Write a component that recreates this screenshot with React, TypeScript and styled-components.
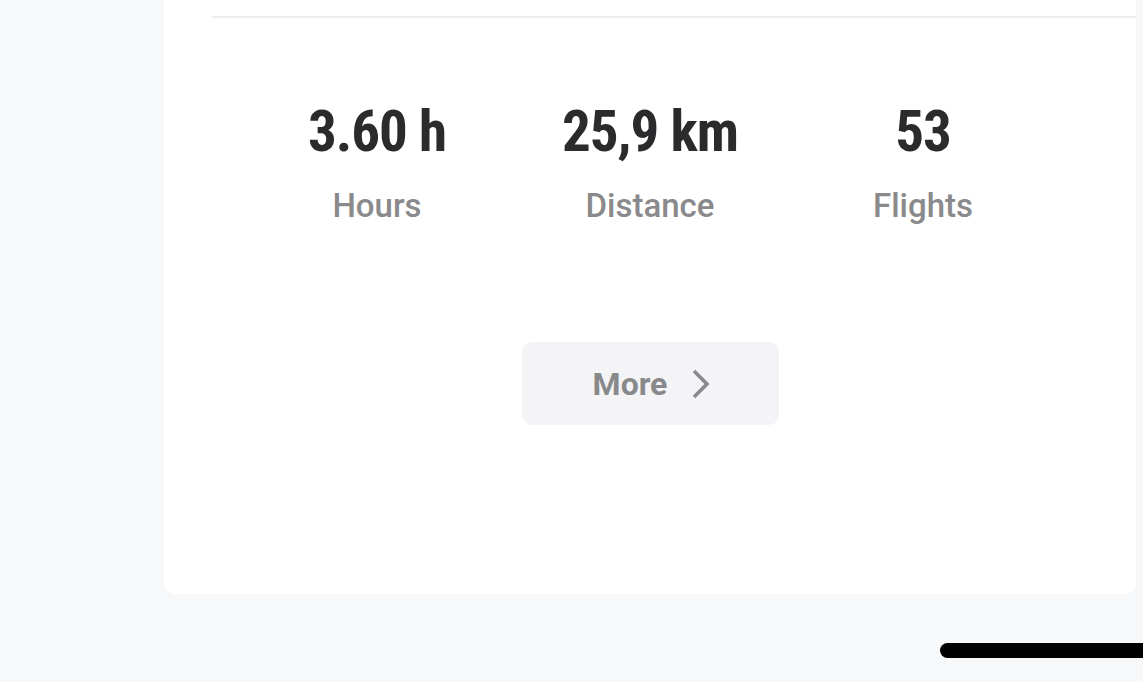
import React from "react";
import styled, { createGlobalStyle } from "styled-components";

const Global = createGlobalStyle`
  html, body { margin: 0; padding: 0; background: #f7f8fa; overflow: hidden; }
  body { width: 1143px; height: 682px; font-family: Roboto, "Liberation Sans", sans-serif; }
`;

const Page = styled.div`
  width: 1143px;
  height: 682px;
  display: flex;
  flex-direction: column;
`;

const Card = styled.section`
  margin-left: 164px;
  width: 972px;
  height: 594px;
  background: #ffffff;
  border-radius: 0 0 12px 12px;
  padding-top: 16px;
  box-sizing: border-box;
  display: flex;
  flex-direction: column;
  align-items: center;
`;

const Divider = styled.div`
  align-self: stretch;
  margin-left: 48px;
  height: 2px;
  background: #eeeeee;
`;

const Stats = styled.div`
  display: grid;
  grid-template-columns: repeat(3, 273px);
  margin-top: 84px;
`;

const Stat = styled.div`
  display: flex;
  flex-direction: column;
  align-items: center;
`;

const Value = styled.div`
  font-family: "Roboto Condensed", Roboto, sans-serif;
  font-stretch: 75%;
  font-weight: 700;
  font-size: 57px;
  letter-spacing: -1px;
  line-height: 60px;
  color: #2b2b2d;
`;

const Label = styled.div`
  font-family: Roboto, sans-serif;
  font-weight: 500;
  font-size: 33px;
  line-height: 36px;
  margin-top: 26px;
  color: #8a8a8c;
`;

const MoreButton = styled.button`
  margin-top: 118px;
  width: 257px;
  height: 83px;
  border: none;
  border-radius: 10px;
  background: #f4f4f6;
  display: flex;
  align-items: center;
  justify-content: center;
  gap: 24px;
  font-family: Roboto, sans-serif;
  font-weight: 700;
  font-size: 32px;
  color: #88898b;
  padding: 0 0 0 4px;
`;

const HomeBar = styled.div`
  margin-top: 49px;
  margin-left: 940px;
  width: 240px;
  height: 15px;
  border-radius: 8px;
  background: #000;
  flex-shrink: 0;
`;

const stats = [
  { value: "3.60 h", label: "Hours" },
  { value: "25,9 km", label: "Distance" },
  { value: "53", label: "Flights" },
];

export default function App() {
  return (
    <Page>
      <Global />
      <Card>
        <Divider />
        <Stats>
          {stats.map((s) => (
            <Stat key={s.label}>
              <Value>{s.value}</Value>
              <Label>{s.label}</Label>
            </Stat>
          ))}
        </Stats>
        <MoreButton>
          More
          <svg width="20" height="30" viewBox="0 0 20 30" fill="none">
            <path d="M3 2 L16 15 L3 28" stroke="#88898b" strokeWidth="3.6" strokeLinecap="butt" strokeLinejoin="miter" />
          </svg>
        </MoreButton>
      </Card>
      <HomeBar />
    </Page>
  );
}
